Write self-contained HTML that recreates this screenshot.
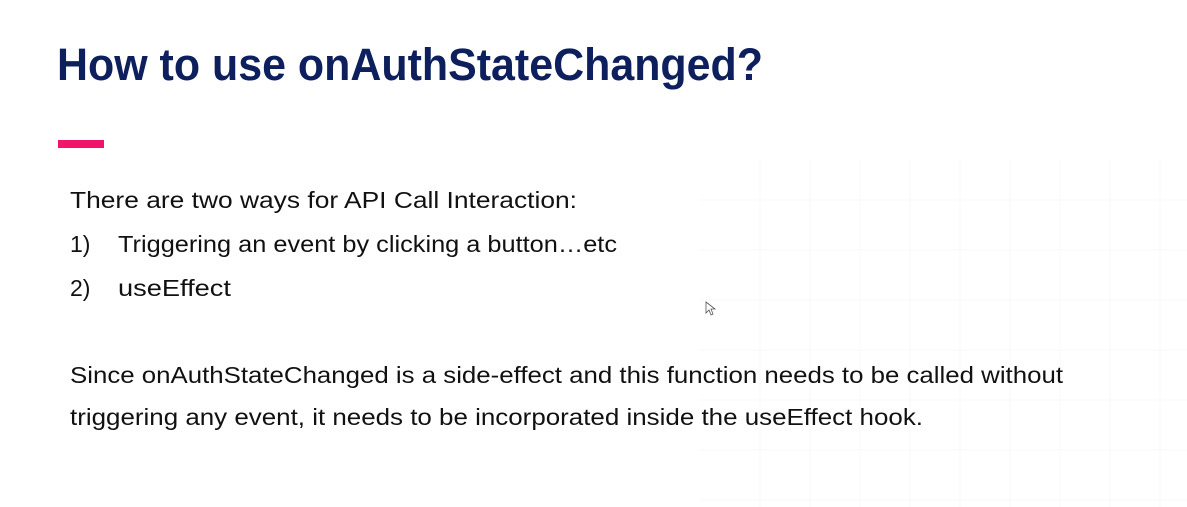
<!DOCTYPE html>
<html><head><meta charset="utf-8"><style>
html,body{margin:0;padding:0;background:#fff;}
svg{display:block}
</style></head><body>
<svg width="1187" height="507" viewBox="0 0 1187 507" xmlns="http://www.w3.org/2000/svg">
<rect width="1187" height="507" fill="#fff"/>
<g stroke="#f8f8f8" stroke-width="1">
<line x1="700" y1="200" x2="1187" y2="200"/>
<line x1="700" y1="250" x2="1187" y2="250"/>
<line x1="700" y1="300" x2="1187" y2="300"/>
<line x1="700" y1="350" x2="1187" y2="350"/>
<line x1="700" y1="400" x2="1187" y2="400"/>
<line x1="700" y1="450" x2="1187" y2="450"/>
<line x1="700" y1="500" x2="1187" y2="500"/>
<line x1="760" y1="160" x2="760" y2="507"/>
<line x1="810" y1="160" x2="810" y2="507"/>
<line x1="860" y1="160" x2="860" y2="507"/>
<line x1="910" y1="160" x2="910" y2="507"/>
<line x1="960" y1="160" x2="960" y2="507"/>
<line x1="1010" y1="160" x2="1010" y2="507"/>
<line x1="1060" y1="160" x2="1060" y2="507"/>
<line x1="1110" y1="160" x2="1110" y2="507"/>
<line x1="1160" y1="160" x2="1160" y2="507"/>
</g>
<text x="57" y="80" font-family="Liberation Sans, sans-serif" font-weight="bold" font-size="45" fill="#0d1f5c" textLength="706" lengthAdjust="spacingAndGlyphs">How to use onAuthStateChanged?</text>
<rect x="58" y="140" width="46" height="8" fill="#f0146a"/>
<g font-family="Liberation Sans, sans-serif" font-size="23" fill="#111">
<text x="70" y="208" textLength="507" lengthAdjust="spacingAndGlyphs">There are two ways for API Call Interaction:</text>
<text x="70" y="252">1)</text>
<text x="118" y="252" textLength="499" lengthAdjust="spacingAndGlyphs">Triggering an event by clicking a button…etc</text>
<text x="70" y="296">2)</text>
<text x="118" y="296" textLength="113" lengthAdjust="spacingAndGlyphs">useEffect</text>
<text x="70" y="383" textLength="993" lengthAdjust="spacingAndGlyphs">Since onAuthStateChanged is a side-effect and this function needs to be called without</text>
<text x="70" y="425" textLength="853" lengthAdjust="spacingAndGlyphs">triggering any event, it needs to be incorporated inside the useEffect hook.</text>
</g>
<path d="M706 302 L706 313 L709 310 L711 315 L713 314 L711 309 L715 309 Z" fill="#fff" stroke="#555" stroke-width="0.8"/>
</svg>
</body></html>
